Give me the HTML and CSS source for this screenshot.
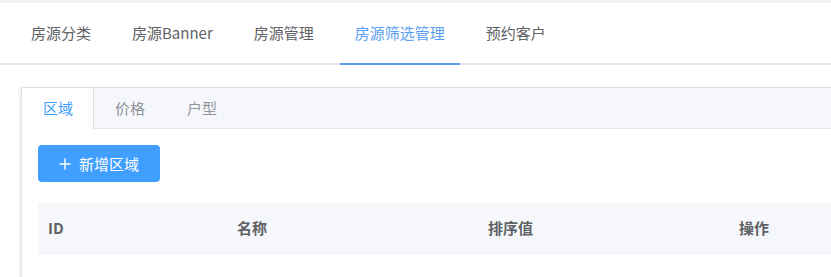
FILE: index.html
```html
<!DOCTYPE html>
<html lang="zh-CN">
<head>
	<meta charset="UTF-8">
	<title>房源筛选管理</title>
	<link rel="stylesheet" href="styles.css">
</head>
<body>
	<div class="topbar"></div>
	<div class="nav">
		<div class="nav-item">房源分类</div>
		<div class="nav-item">房源Banner</div>
		<div class="nav-item">房源管理</div>
		<div class="nav-item active">房源筛选管理</div>
		<div class="nav-item">预约客户</div>
	</div>
	<div class="main">
		<div class="card">
			<div class="card-tabs">
				<div class="tab active">区域</div>
				<div class="tab">价格</div>
				<div class="tab">户型</div>
			</div>
			<div class="content">
				<button class="btn">
					<svg width="12" height="12" viewBox="0 0 12 12"><path d="M6 0.5v11M0.5 6h11" stroke="#fff" stroke-width="1.4" fill="none"/></svg>
					<span>新增区域</span>
				</button>
				<div class="thead">
					<div class="th">ID</div>
					<div class="th">名称</div>
					<div class="th">排序值</div>
					<div class="th">操作</div>
				</div>
			</div>
		</div>
	</div>
</body>
</html>
```

FILE: styles.css
```css
*{margin:0;padding:0;box-sizing:border-box}
body{font-family:"Noto Sans CJK SC","Liberation Sans",sans-serif;background:#fff;overflow:hidden;width:831px;height:277px}
.topbar{height:3px;background:#f0f2f5}
.nav{display:flex;gap:11px;padding-left:16px;border-bottom:2px solid #e4e7ed}
.nav-item{padding:0 15px;line-height:60px;height:62px;margin-bottom:-2px;border-bottom:2px solid transparent;font-size:15px;color:#606266}
.nav-item.active{color:#5b9ef5;border-bottom-color:#5b9ef5}
.main{padding:22px 0 0 21px}
.card{width:830px;height:200px;background:#fff;border:1px solid #dcdfe6;box-shadow:0 2px 4px rgba(0,0,0,.12),0 0 6px rgba(0,0,0,.04)}
.card-tabs{display:flex;height:41px;background:#f5f7fa;border-bottom:1px solid #e4e7ed}
.tab{padding:0 21px;line-height:40px;font-size:15px;color:#909399}
.tab.active{background:#fff;color:#409eff;height:41px;padding-right:20px;border-right:1px solid #dcdfe6}
.content{padding:16px 0 0 16px}
.btn{display:flex;align-items:center;justify-content:center;gap:8px;width:122px;height:37px;border:none;border-radius:4px;background:#409eff;color:#fff;font-family:inherit;font-size:15px}
.thead{display:grid;grid-template-columns:189px 251px 251px 1fr;height:51px;margin-top:21px;background:#f5f7fa;border-bottom:1px solid #ebeef5}
.th{padding:0 10px;line-height:50px;font-size:15px;font-weight:bold;color:#606266}
```
